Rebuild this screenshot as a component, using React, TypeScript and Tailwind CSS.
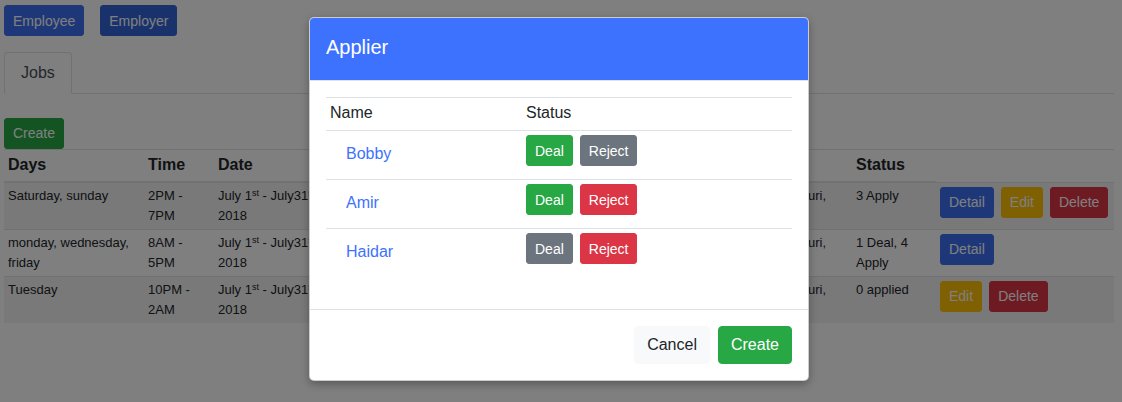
import React from "react";

const rows = [
  {
    days: "Saturday, sunday",
    time: ["2PM -", "7PM"],
    status: "3 Apply",
    actions: ["detail", "edit", "delete"],
    striped: true,
  },
  {
    days: "monday, wednesday, friday",
    time: ["8AM -", "5PM"],
    status: "1 Deal, 4 Apply",
    actions: ["detail"],
    striped: false,
  },
  {
    days: "Tuesday",
    time: ["10PM -", "2AM"],
    status: "0 applied",
    actions: ["edit", "delete"],
    striped: true,
  },
];

const appliers = [
  { name: "Bobby", deal: true, reject: false },
  { name: "Amir", deal: true, reject: true },
  { name: "Haidar", deal: false, reject: true },
];

function SmBtn({ kind }: { kind: string }) {
  if (kind === "detail")
    return (
      <button className="h-[31px] px-[8px] rounded-[3px] border border-[#3d6ff0] bg-[#3d6ff0] text-white text-[14px] leading-[21px]">
        Detail
      </button>
    );
  if (kind === "edit")
    return (
      <button className="h-[31px] px-[8px] rounded-[3px] border border-[#ffc107] bg-[#ffc107] text-white text-[14px] leading-[21px]">
        Edit
      </button>
    );
  return (
    <button className="h-[31px] px-[8px] rounded-[3px] border border-[#dc3545] bg-[#dc3545] text-white text-[14px] leading-[21px]">
      Delete
    </button>
  );
}

export default function App() {
  return (
    <div className="relative w-[1122px] h-[402px] overflow-hidden bg-white text-[#212529] font-['Liberation_Sans',Arial,sans-serif]">
      {/* Page */}
      <div className="pl-[4px] pr-[8px] pt-[5px]">
        <div className="flex gap-[16px]">
          <button className="h-[31px] px-[8px] rounded-[3px] border border-[#3d6ff0] bg-[#3d6ff0] text-white text-[14px] leading-[20px]">
            Employee
          </button>
          <button className="h-[31px] px-[8px] rounded-[3px] border border-[#3464d8] bg-[#3464d8] text-white text-[14px] leading-[20px]">
            Employer
          </button>
        </div>

        <div className="mt-[16px] flex border-b border-[#dee2e6]">
          <div className="-mb-px px-[16px] py-[8px] border border-[#dee2e6] border-b-white rounded-t-[4px] bg-white text-[16px] leading-[24px] text-[#495057]">
            Jobs
          </div>
        </div>

        <div className="mt-[24px]">
          <button className="h-[31px] px-[8px] rounded-[3px] border border-[#28a745] bg-[#28a745] text-white text-[14px] leading-[21px]">
            Create
          </button>
        </div>

        <table className="w-full table-fixed border-collapse">
          <colgroup>
            <col className="w-[140px]" />
            <col className="w-[70px]" />
            <col className="w-[186px]" />
            <col className="w-[150px]" />
            <col className="w-[150px]" />
            <col className="w-[152px]" />
            <col className="w-[84px]" />
            <col />
          </colgroup>
          <thead>
            <tr>
              {["Days", "Time", "Date", "Position", "Salary", "Location", "Status"].map((h) => (
                <th
                  key={h}
                  className="text-left align-bottom px-[4px] pt-[3px] pb-[4px] border-t border-b-2 border-[#dee2e6] text-[16px] leading-[24px] font-bold"
                >
                  {h}
                </th>
              ))}
              <td className="border-t border-[#dee2e6]"></td>
            </tr>
          </thead>
          <tbody>
            {rows.map((r, i) => (
              <tr key={i} className={r.striped ? "bg-black/5" : ""}>
                <td className="align-top px-[4px] pt-[3px] pb-[4px] border-t border-[#dee2e6] text-[13px] leading-[19.5px]">{r.days}</td>
                <td className="align-top px-[4px] pt-[3px] pb-[4px] border-t border-[#dee2e6] text-[13px] leading-[19.5px]">
                  {r.time[0]}
                  <br />
                  {r.time[1]}
                </td>
                <td className="align-top px-[4px] pt-[3px] pb-[4px] border-t border-[#dee2e6] text-[13px] leading-[19.5px]">
                  <span className="whitespace-nowrap">
                    July 1<sup className="text-[9px] top-[-0.4em]">st</sup> - July31<sup className="text-[9px] top-[-0.4em]">st</sup>
                  </span>
                  <br />
                  2018
                </td>
                <td className="align-top px-[4px] pt-[3px] pb-[4px] border-t border-[#dee2e6] text-[13px] leading-[19.5px]">Waiter</td>
                <td className="align-top px-[4px] pt-[3px] pb-[4px] border-t border-[#dee2e6] text-[13px] leading-[19.5px]">Rp 50.000</td>
                <td className="align-top px-[4px] pt-[3px] pb-[4px] border-t border-[#dee2e6] text-[13px] leading-[19.5px]">
                  <div className="w-[122px] text-right whitespace-nowrap">Kampung Duri,</div>
                  <div>Jakarta</div>
                </td>
                <td className="align-top px-[4px] pt-[3px] pb-[4px] border-t border-[#dee2e6] text-[13px] leading-[19.5px]">{r.status}</td>
                <td className="align-top px-[4px] pt-[4px] pb-[3px] border-t border-[#dee2e6] text-[13px] leading-[19.5px]">
                  <div className="flex gap-[7px]">
                    {r.actions.map((a) => (
                      <SmBtn key={a} kind={a} />
                    ))}
                  </div>
                </td>
              </tr>
            ))}
          </tbody>
        </table>
      </div>

      {/* Backdrop */}
      <div className="absolute inset-0 bg-black/50"></div>

      {/* Modal */}
      <div className="absolute inset-0 flex justify-start items-start pt-[17px] pl-[309px]">
        <div className="w-[500px] bg-white border border-black/20 rounded-[5px] shadow-[0_3px_9px_rgba(0,0,0,0.3)]">
          <div className="bg-[#3d72fe] rounded-t-[4px] border-b border-[#dee2e6] px-[16px] pt-[14px] pb-[18px]">
            <div className="text-white text-[20px] leading-[30px]">Applier</div>
          </div>
          <div className="p-[16px]">
            <div className="mb-[16px]">
              <div className="flex border-t border-[#dee2e6] text-[16px] leading-[24px]">
                <div className="w-[196px] px-[4px] pt-[3px] pb-[5px]">Name</div>
                <div className="flex-1 px-[4px] pt-[3px] pb-[5px]">Status</div>
              </div>
              {appliers.map((a) => (
                <div key={a.name} className="flex h-[49px] border-t border-[#dee2e6]">
                  <div className="w-[196px] pl-[20px] pt-[11px] text-[16px] leading-[24px] text-[#3d72fe]">{a.name}</div>
                  <div className="flex-1 p-[4px] flex items-start gap-[7px]">
                    <button
                      className={
                        "h-[31px] px-[8px] rounded-[3px] border text-white text-[14px] leading-[20px] " +
                        (a.deal ? "bg-[#28a745] border-[#28a745]" : "bg-[#6c757d] border-[#6c757d]")
                      }
                    >
                      Deal
                    </button>
                    <button
                      className={
                        "h-[31px] px-[8px] rounded-[3px] border text-white text-[14px] leading-[20px] " +
                        (a.reject ? "bg-[#dc3545] border-[#dc3545]" : "bg-[#6c757d] border-[#6c757d]")
                      }
                    >
                      Reject
                    </button>
                  </div>
                </div>
              ))}
            </div>
          </div>
          <div className="flex justify-end gap-[8px] border-t border-[#dee2e6] p-[16px]">
            <button className="h-[38px] px-[12px] rounded-[4px] border border-[#f8f9fa] bg-[#f8f9fa] text-[#212529] text-[16px] leading-[24px]">
              Cancel
            </button>
            <button className="h-[38px] px-[12px] rounded-[4px] border border-[#28a745] bg-[#28a745] text-white text-[16px] leading-[24px]">
              Create
            </button>
          </div>
        </div>
      </div>
    </div>
  );
}
